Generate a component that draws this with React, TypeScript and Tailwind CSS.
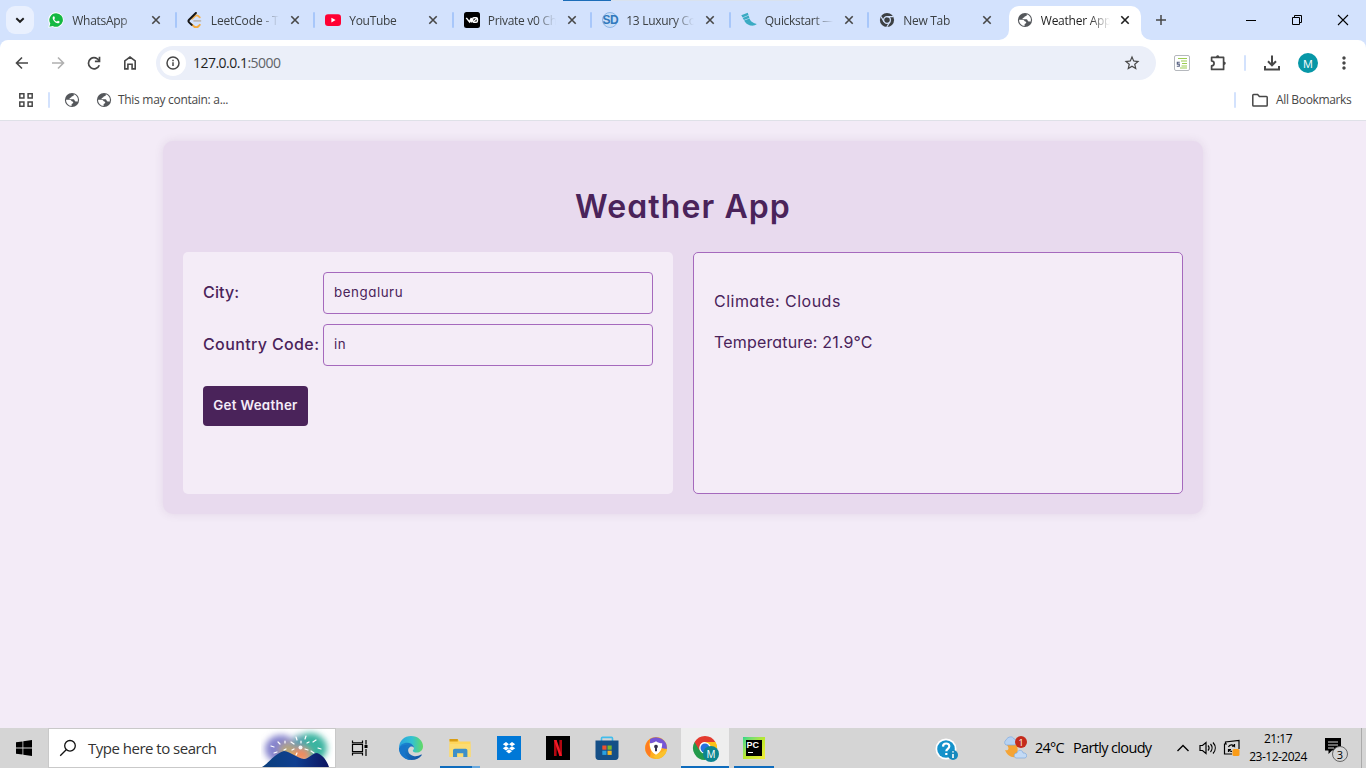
import type { ReactNode } from "react";
import { MdStarBorder, MdMoreVert } from "react-icons/md";

function WhatsAppIcon() {
  return (
    <svg viewBox="0 0 16 16" className="size-4">
      <path d="M8 .3a7.7 7.7 0 0 0-6.7 11.5L.2 15.8l4.1-1A7.7 7.7 0 1 0 8 .3z" fill="#fff" />
      <path d="M8.1 1.2a6.8 6.8 0 0 0-5.8 10.3l-.9 3.2 3.3-.8A6.8 6.8 0 1 0 8.1 1.2z" fill="#14b842" />
      <path d="M5.7 4.3c-.3 0-1.2.7-1 2 .3 2.400 2.800 4.800 5 5 1.300.1 2-.7 2-1.600 0-.3-1.600-1.100-1.900-1-.3.100-.700 1-1 .900C7.700 9.200 6.600 8.100 6.300 7.200c-.1-.300.700-.700.6-1.200-.1-.5-.6-1.600-.9-1.700z" fill="#fff" />
    </svg>
  );
}

function LeetCodeIcon() {
  return (
    <svg viewBox="0 0 16 16" className="size-4" fill="none" strokeLinecap="round">
      <path d="M12.800 5.400 11.300 4a2.800 2.800 0 0 0-3.400 0L5 6.900" stroke="#f5b14e" strokeWidth="1.800" />
      <path d="M4.500 12.200 6.800 14.200a3.300 3.300 0 0 0 4.600 0l1.400-1.400" stroke="#f5a93b" strokeWidth="1.900" />
      <path d="M7 8.900h6.500" stroke="#bdb8b4" strokeWidth="1.600" />
      <path d="M8.900 1 2.100 7.700a2 2 0 0 0 0 2.700l2.600 2.500" stroke="#161616" strokeWidth="2" />
    </svg>
  );
}

function YouTubeIcon() {
  return (
    <svg viewBox="0 0 16 16" className="size-4">
      <rect x="0" y="2.300" width="16" height="11.600" rx="3" fill="#ff0033" />
      <path d="M6.400 5.700v4.800L10.600 8.100z" fill="#fff" />
    </svg>
  );
}

function VZeroIcon() {
  return (
    <svg viewBox="0 0 16 16" className="size-4" fill="none" stroke="#fff" strokeWidth="1.500">
      <rect width="16" height="16" rx="2.500" fill="#000" stroke="none" />
      <path d="M2.300 5.900 5.500 9.900 7.300 6v4.400" />
      <rect x="8.700" y="5.800" width="4.700" height="4.500" rx="1.300" />
      <path d="m9 10 4.200-4" strokeWidth="1.200" />
    </svg>
  );
}

function SdIcon() {
  return (
    <span className="flex size-4 items-center justify-center rounded-full border border-[#8bb5e6] bg-[#c8ddf7]">
      <span className="font-['Liberation_Sans',sans-serif] text-[12px] leading-none font-bold tracking-[-0.6px] text-[#3179bd]">SD</span>
    </span>
  );
}

function FlaskIcon() {
  return (
    <svg viewBox="0 0 16 16" className="size-4">
      <path d="M.3 3.200 6.700.7l.8 2.200-5.900 2.600zM1.700 6.100l6-2.500.7 2.300-5.500 2zM3.100 8.500l5.500-1.900c.8 2.500 2.500 4.200 7.200 5.400-1.700 1.700-4.200 1.800-6.700 1.500C6 12.500 4.300 10.700 3.100 8.500z" fill="#3babc3" />
    </svg>
  );
}

function ChromeMonoIcon() {
  return (
    <svg viewBox="0 0 16 16" className="size-4">
      <circle cx="8" cy="8" r="7.100" fill="#3c4043" />
      <g fill="none" stroke="#d3e2fd" strokeWidth="1.200">
        <circle cx="8" cy="8" r="3.400" />
        <path d="M8 4.600h6.300M5 9.700 2 4.500M10.900 9.700l-3.100 5.300" />
      </g>
      <circle cx="8" cy="8" r="2" fill="#3c4043" />
    </svg>
  );
}

function GlobeIcon() {
  return (
    <svg viewBox="0 0 16 16" className="size-4 shrink-0">
      <circle cx="8" cy="8" r="7.100" fill="#54575b" />
      <path d="M9.800 2.200C10 3.300 9.400 4.200 8.400 4.200c-1.200 0-.8 1.300-1.900 1.500-1.100.2-1.300 1.600-.1 1.600h3c1.200 0 1.100 2.100 2.200 2.100h2.200A6 6 0 0 0 9.800 2.200z" fill="#fff" />
      <path d="M2 7.700h3.600c1.500 0 1.700 1.600 2.900 1.900 1.100.3.900 1.800 0 2-.9.200-1 1-.9 2.300A6 6 0 0 1 2 7.700z" fill="#fff" />
    </svg>
  );
}

function Close({ dark }: { dark?: boolean }) {
  return (
    <svg viewBox="0 0 16 16" className="size-4 shrink-0" stroke={dark ? "#1f1f1f" : "#474747"} strokeWidth="1.600">
      <path d="m4.300 4.300 7.400 7.400m0-7.400-7.400 7.400" />
    </svg>
  );
}

const tabs: { title: string; icon: ReactNode; style: string }[] = [
  { title: "WhatsApp", icon: <WhatsAppIcon />, style: "tracking-[-0.3px]" },
  { title: "LeetCode - T", icon: <LeetCodeIcon />, style: "tracking-[-0.15px]" },
  { title: "YouTube", icon: <YouTubeIcon />, style: "tracking-[-0.3px]" },
  { title: "Private v0 Ch", icon: <VZeroIcon />, style: "tracking-[-0.3px]" },
  { title: "13 Luxury Co", icon: <SdIcon />, style: "tracking-[-0.3px]" },
  { title: "Quickstart —", icon: <FlaskIcon />, style: "tracking-[-0.3px]" },
  { title: "New Tab", icon: <ChromeMonoIcon />, style: "tracking-[-0.3px]" },
];

function TabStrip() {
  return (
    <div className="relative flex h-10 bg-[#d3e2fd]">
      <div className="absolute top-0 left-[563px] flex h-px w-[240px] bg-[#d9e2ee]">
        <div className="w-12 bg-[#1c6db8]" />
      </div>
      <div className="flex w-[38.3px] shrink-0 items-center pl-[6px]">
        <div className="flex size-7 items-center justify-center rounded-[9px] bg-[#e9f0fe]">
          <svg viewBox="0 0 16 16" className="size-4" fill="none" stroke="#1f1f1f" strokeWidth="1.900">
            <path d="m4.300 6.200 3.700 3.600 3.700-3.600" />
          </svg>
        </div>
      </div>
      {tabs.map((t, i) => (
        <div key={t.title} className="flex w-[138.5px] shrink-0 items-center pl-[10px]">
          <span className="size-4 shrink-0">{t.icon}</span>
          <span className={`ml-2 w-[72px] pt-px text-[12px] whitespace-nowrap text-[#3c4043] [mask-image:linear-gradient(to_right,black_48px,transparent_68px)] ${t.style}`}>{t.title}</span>
          <span className="ml-[4px] flex"><Close /></span>
          {i < 6 && <span className="ml-auto h-4 w-[2px] rounded-full bg-[#a8c7fa]" />}
        </div>
      ))}
      <div className="flex w-[147px] shrink-0 pt-[6px]">
        <svg viewBox="0 0 10 10" className="-ml-[9px] mt-auto size-[10px] shrink-0"><path d="M10 0v10H0A10 10 0 0 0 10 0z" fill="#fff" /></svg>
        <div className="flex w-[132px] shrink-0 items-center rounded-t-[10px] bg-white pb-[6px] pl-2">
          <GlobeIcon />
          <span className="ml-2 w-[70px] pt-px text-[12px] tracking-[-0.25px] whitespace-nowrap text-[#1f1f1f] [mask-image:linear-gradient(to_right,black_48px,transparent_69px)]">Weather App</span>
          <span className="ml-[6px] flex"><Close dark /></span>
        </div>
        <svg viewBox="0 0 10 10" className="mt-auto size-[10px] shrink-0"><path d="M0 0v10h10A10 10 0 0 1 0 0z" fill="#fff" /></svg>
      </div>
      <div className="flex flex-1 items-center">
        <svg viewBox="0 0 16 16" className="ml-[-2px] size-4" stroke="#474747" strokeWidth="1.500"><path d="M8 3v10M3 8h10" /></svg>
        <svg viewBox="0 0 12 12" className="mr-[34px] ml-auto size-3" stroke="#000"><path d="M1 6.500h10" /></svg>
        <svg viewBox="0 0 12 12" className="mr-[34px] size-3" stroke="#000" fill="none"><path d="M1.500 3.500h7v7h-7zM3.500 3.500v-2h7v7h-2" /></svg>
        <svg viewBox="0 0 12 12" className="mr-[17px] size-3" stroke="#000" fill="none" strokeWidth="1.100"><path d="m1 1 10 10M11 1 1 11" /></svg>
      </div>
    </div>
  );
}

function Toolbar() {
  return (
    <div className="bg-[#d3e2fd]">
      <div className="flex h-[46px] items-center rounded-t-[8px] bg-white">
        <div className="ml-3 flex gap-4 text-[#474747]">
          <svg viewBox="0 0 20 20" className="size-5" fill="none" stroke="currentColor" strokeWidth="1.600"><path d="M16 10H5M10 4.500 4.500 10l5.500 5.500" /></svg>
          <svg viewBox="0 0 20 20" className="size-5" fill="none" stroke="#b0b0b0" strokeWidth="1.600"><path d="M4 10h11M10 4.500l5.500 5.500-5.500 5.500" /></svg>
          <svg viewBox="0 0 20 20" className="size-5" fill="none" stroke="currentColor" strokeWidth="1.700"><path d="M15.300 8.200A5.600 5.600 0 1 0 15.300 12.200" /><path d="M15.500 3.800v4.600h-4.600" /></svg>
          <svg viewBox="0 0 20 20" className="size-5" fill="none" stroke="currentColor" strokeWidth="1.600"><path d="M4.800 15.900V7.900L10 4l5.200 3.900v8h-3.100v-4.600H7.900v4.600z" /></svg>
        </div>
        <div className="ml-4 flex h-[34px] w-[1000px] items-center rounded-full bg-[#ebeff9]">
          <div className="ml-1 flex size-[26px] items-center justify-center rounded-full bg-white">
            <svg viewBox="0 0 16 16" className="size-4" fill="none" stroke="#474747" strokeWidth="1.500"><circle cx="8" cy="8" r="6" /><path d="M8 7.200V11M8 4.800v1.500" /></svg>
          </div>
          <span className="ml-[7px] pb-px text-[14px] tracking-[-0.52px] text-[#1f1f1f]">127.0.0.1<span className="text-[#5f6368]">:5000</span></span>
          <MdStarBorder className="mr-[15px] ml-auto size-[18px] text-[#474747]" />
        </div>
        <svg viewBox="0 0 16 16" className="ml-[18px] size-4">
          <rect x=".5" y=".5" width="15" height="15" rx="1.500" fill="#fff" stroke="#b5b8bd" />
          <path d="M4 3.500h9M7 6h6M8 8.500h5M7.500 11H13M6 13h7" stroke="#9ccc50" strokeWidth="1.200" />
          <path d="M5.800 7.200H3.300v1.900h2v2.200H2.800" fill="none" stroke="#555f80" strokeWidth="1.100" />
        </svg>
        <svg viewBox="0 0 20 20" className="ml-[18px] size-5" fill="none" stroke="#474747" strokeWidth="1.700" strokeLinejoin="round">
          <path d="M3.600 4.400h12v12h-12v-3.500c3.300-.6 3.300-4.400 0-5z" />
          <path d="M8 4.200a1.700 1.700 0 0 1 3.400 0zM15.800 8.500a1.700 1.700 0 0 1 0 3.400z" fill="#474747" stroke="none" />
          <path d="M8.700 3.400h2M16.600 9.200v2" />
        </svg>
        <span className="ml-4 h-4 w-[2px] rounded-full bg-[#d3e2fd]" />
        <svg viewBox="0 0 20 20" className="ml-4 size-5" fill="none" stroke="#474747" strokeWidth="2"><path d="M10 2.500v9M6 8.300l4 4 4-4M3 13v3.600h14V13" /></svg>
        <div className="ml-4 flex size-5 items-center justify-center rounded-full bg-[#0797a7] text-[11px] leading-none text-white">M</div>
        <MdMoreVert className="ml-[16px] size-5 text-[#474747]" />
      </div>
    </div>
  );
}

function Bookmarks() {
  return (
    <div className="flex h-[35px] items-center border-b border-[#dfe1e8] bg-white pb-[6px] text-[12px] text-[#474747]">
      <svg viewBox="0 0 16 16" className="ml-[18px] size-4" fill="none" stroke="currentColor" strokeWidth="1.500"><path d="M1.800 1.800h4.100v4.100H1.800zM10.100 1.800h4.100v4.100h-4.100zM1.800 10.100h4.100v4.100H1.800zM10.100 10.100h4.100v4.100h-4.100z" /></svg>
      <span className="ml-[14px] h-4 w-[2px] rounded-full bg-[#d3e2fd]" />
      <span className="ml-[14px]"><GlobeIcon /></span>
      <span className="ml-4"><GlobeIcon /></span>
      <span className="ml-[6px] tracking-[-0.3px] whitespace-nowrap">This may contain: a...</span>
      <span className="ml-auto h-4 w-[2px] rounded-full bg-[#d3e2fd]" />
      <svg viewBox="0 0 18 16" className="ml-[15px] h-4 w-[18px]" fill="none" stroke="currentColor" strokeWidth="1.500"><path d="M1.800 3.300a.8.8 0 0 1 .8-.8h4l1.800 2h7a.8.8 0 0 1 .8.8v7.900a.8.8 0 0 1-.8.800H2.600a.8.8 0 0 1-.8-.8z" /></svg>
      <span className="ml-[7px] w-[90px] tracking-[-0.35px] whitespace-nowrap">All Bookmarks</span>
    </div>
  );
}

function WeatherPage() {
  return (
    <main className="h-[607px] bg-[#f3ebf7] pt-5 font-['Inter',sans-serif] text-[#4a235a] [font-feature-settings:'cv11'_1]">
      <section className="mx-auto flex h-[373px] w-[1040px] flex-col rounded-[10px] bg-[#e8daee] px-5 pb-5 shadow-[0_0_10px_rgba(74,35,90,0.1)]">
        <h1 className="flex h-[111px] items-center justify-center pt-[20px] text-[32px] font-semibold tracking-[1.1px]">Weather App</h1>
        <div className="flex flex-1 gap-5">
          <form className="flex flex-1 flex-col gap-[10px] rounded-[5px] bg-[#f4ecf7] p-5">
            <label className="flex items-center text-[16px] font-medium">
              <span className="w-[120px] pb-[2px] tracking-[0.15px] whitespace-nowrap">City:</span>
              <input readOnly value="bengaluru" className="h-[42px] w-[330px] rounded-[4px] border border-[#a569bd] px-[10px] pb-[2px] text-[13.333px] font-normal tracking-[0.55px]" />
            </label>
            <label className="flex items-center text-[16px] font-medium">
              <span className="w-[120px] pb-[2px] tracking-[0.37px] whitespace-nowrap">Country Code:</span>
              <input readOnly value="in" className="h-[42px] w-[330px] rounded-[4px] border border-[#a569bd] px-[10px] pb-[2px] text-[13.333px] font-normal tracking-[0.5px]" />
            </label>
            <button type="button" className="mt-[10px] h-10 w-[105px] rounded-[4px] bg-[#4a235a] text-[13.333px] font-semibold tracking-[0.3px] whitespace-nowrap text-[#f4ecf7]">Get Weather</button>
          </form>
          <div className="flex-1 rounded-[5px] border border-[#a569bd] bg-[#f4ecf7] px-5 pt-9 text-[16px]">
            <p className="h-[41px] tracking-[0.48px]">Climate: Clouds</p>
            <p className="tracking-[0.17px]">Temperature: 21.9°C</p>
          </div>
        </div>
      </section>
    </main>
  );
}

function Fireworks() {
  return (
    <svg viewBox="0 0 72 38" className="h-[38px] w-[72px]">
      <defs>
        <filter id="soft" x="-40%" y="-40%" width="180%" height="180%"><feGaussianBlur stdDeviation="3" /></filter>
        <linearGradient id="hill" x1="0" x2="1" y1="0" y2="0"><stop offset="0" stopColor="#0b3f7c" /><stop offset=".5" stopColor="#103f90" /><stop offset="1" stopColor="#0d1460" /></linearGradient>
      </defs>
      <g filter="url(#soft)">
        <ellipse cx="20" cy="20" rx="16" ry="14" fill="#8583cd" />
        <ellipse cx="49" cy="19" rx="17" ry="15" fill="#3bb4a0" />
        <ellipse cx="27" cy="22" rx="9" ry="9" fill="#b3a57e" />
        <ellipse cx="38" cy="14" rx="6" ry="8" fill="#5c9fae" />
        <ellipse cx="40" cy="26" rx="9" ry="7" fill="#f28a5c" />
        <ellipse cx="28" cy="29" rx="7" ry="4" fill="#edb83e" />
      </g>
      <g stroke="#fff" strokeWidth="1.200" strokeLinecap="round">
        <path d="m35 8 1 3M45 7l-1 3M55 11l-3 2M57 19l3 1M30 13l3 2M40 12v2M46 14l2-1M50 22l3 2M33 20l-2 1M44 20l3 1M36 24l-1 2" />
        <path d="m17 13 2 2M10 17l3 1M24 12v2M13 24l3-1M25 20l-2 1" />
      </g>
      <circle cx="39.500" cy="18.500" r="2" fill="#fff" opacity=".9" />
      <path d="M1 38C8 34 13 25 23 22c7 1 13 7 20 8 5 0 8-6 13-6 6 2 10 8 12 14z" fill="url(#hill)" />
    </svg>
  );
}

function EdgeIcon() {
  return (
    <svg viewBox="0 0 24 24" className="size-6">
      <defs>
        <linearGradient id="edgeTop" x1="0" x2="1"><stop stopColor="#2aa3df" /><stop offset=".55" stopColor="#33c2d0" /><stop offset="1" stopColor="#63da62" /></linearGradient>
        <linearGradient id="edgeLow" x1="0" y1="0" x2="1" y2="1"><stop stopColor="#1b8bd8" /><stop offset="1" stopColor="#124f9e" /></linearGradient>
      </defs>
      <path d="M0 12C0 4.700 5.600 0 12 0c7.400 0 12 5 12 10.300 0 4-3 6.300-6.200 6.300-2.600 0-4-1-4-1.900 0-.8 1.200-1 1.200-2.700C15 9.500 12.300 7.500 9.300 7.500 5 7.500 1 9.900 0 12z" fill="url(#edgeTop)" />
      <path d="M0 12.500c.6-3.500 4.300-6 8.800-5.700 3.500.3 6.200 2.500 6.200 5-1-1-2.500-1.600-4-.9-2.600 1.400-2.400 5.300.4 7.600 2.900 2.200 6.900 2.400 10.700.1.500-.3.900.2.600.7C20.600 22.300 17 24 12.500 24 5.500 24 0 18.800 0 12.500z" fill="url(#edgeLow)" />
      <path d="M6 13.500c-.8 5 2.500 9.500 7 10.500C5.500 24.300.3 19 .1 12.300 2 9 6 8.400 9 9.200 7.300 10 6.300 11.500 6 13.500z" fill="#1675ca" />
    </svg>
  );
}

function ExplorerIcon() {
  return (
    <svg viewBox="0 0 24 24" className="size-6">
      <path d="M1.500 3h8.300l1.800 2.500h10.900V21h-21z" fill="#ffd65c" />
      <path d="M1.500 3h8.300v2.500h-8.300z" fill="#d99d14" />
      <path d="M1.500 8h21v13h-21z" fill="#fcdc72" />
      <path d="M5 21v-6.500c0-1 .8-1.700 1.700-1.700h11c1 0 1.700.8 1.700 1.700V21h-4.100v-3.700H9.100V21z" fill="#3e90c9" />
    </svg>
  );
}

function DropboxIcon() {
  return (
    <svg viewBox="0 0 24 24" className="size-6">
      <path d="M0 0h24v24H0z" fill="#0078d7" />
      <path d="m9 6-3.200 2.200L9 10.300l3-2.100zM15 6l-3 2.200 3 2.100 3.200-2.100zM5.800 12.300 9 14.400l3-2.100-3-2zM15 10.300l-3 2 3 2.100 3.200-2.100zM9 15.300l3 2.100 3-2.100-3-2z" fill="#fff" />
    </svg>
  );
}

function NetflixIcon() {
  return (
    <svg viewBox="0 0 24 24" className="size-6">
      <path d="M0 0h24v24H0z" fill="#000" />
      <path d="M8 4h2.600v16H8zM13.400 4H16v16h-2.600z" fill="#b20710" />
      <path d="M8 4h2.600L16 20h-2.600z" fill="#f21a27" />
    </svg>
  );
}

function StoreIcon() {
  return (
    <svg viewBox="0 0 24 24" className="size-6">
      <path d="M6.500 6V2.400c0-.6.400-1 1-1h9c.6 0 1 .4 1 1V6" fill="none" stroke="#42bdec" strokeWidth="1.600" />
      <path d="M.5 4.500h23v16c0 2-1 3.500-3 3.500h-17c-2 0-3-1.500-3-3.500z" fill="#154f87" />
      <path d="M7.300 9.500h4.200v4.200H7.300z" fill="#ef512d" /><path d="M12.500 9.500h4.200v4.200h-4.200z" fill="#79b72b" />
      <path d="M7.300 14.700h4.200v4.200H7.300z" fill="#29a0df" /><path d="M12.500 14.700h4.200v4.200h-4.200z" fill="#f5b523" />
    </svg>
  );
}

function AvastIcon() {
  return (
    <svg viewBox="0 0 24 24" className="size-6">
      <circle cx="12" cy="12" r="11" fill="#ffae20" />
      <path d="M6 3A11 11 0 0 1 22.900 13L17 12 12 6 6 8z" fill="#7656d6" />
      <path d="M6 3A11 11 0 0 0 6 21l1-6L5 9z" fill="#ff7b22" />
      <path d="M22.900 12.500A11 11 0 0 1 12 23L9 20l9-4z" fill="#fbc22c" />
      <path d="M12 5.200c2 1.500 4 2 6.200 2.100 0 5.500-1.800 9-6.200 11.500C7.600 16.300 5.800 12.800 5.800 7.300 8 7.200 10 6.700 12 5.200z" fill="#fff" />
      <path d="M12 8.700a1.900 1.900 0 0 0-1 3.500v3h2v-3a1.900 1.900 0 0 0-1-3.500z" fill="#34304d" />
    </svg>
  );
}

function ChromeIcon() {
  return (
    <svg viewBox="0 0 28 28" className="size-7 overflow-visible">
      <path d="M12 12 22.400 6A12 12 0 0 1 12 24z" fill="#fbc116" />
      <path d="M12 12v12A12 12 0 0 1 1.600 6z" fill="#239a4b" />
      <path d="M12 6h10.400a12 12 0 0 1 1.600 6l-7 3z" fill="#fbc116" />
      <path d="M1.600 6A12 12 0 0 1 22.400 6H12c-3 0-5 2-5.500 4.700L6.500 14.500z" fill="#e33b2e" />
      <circle cx="12" cy="12" r="5.800" fill="#fff" /><circle cx="12" cy="12" r="4.500" fill="#2672df" />
    </svg>
  );
}

function TaskItem({ children, state = "w-[49px]" }: { children: ReactNode; state?: string }) {
  return <div className={`relative flex h-10 shrink-0 items-center justify-center ${state}`}>{children}</div>;
}

function Taskbar() {
  return (
    <footer className="flex h-10 items-center bg-[#d5d5d5] text-[15px] text-black">
      <div className="flex w-12 justify-center">
        <svg viewBox="0 0 16 16" className="size-4" fill="#000"><path d="M0 2.300 6.500 1.400v6.100H0zM7.300 1.300 16 0v7.500H7.300zM0 8.400h6.500v6.200L0 13.700zM7.300 8.400H16V16l-8.700-1.300z" /></svg>
      </div>
      <div className="flex h-10 w-[288px] items-center border border-[#c9c9c9] bg-white">
        <svg viewBox="0 0 18 18" className="ml-[10px] size-[18px]" fill="none" stroke="#111" strokeWidth="1.300"><circle cx="11" cy="6.800" r="5.300" /><path d="m7.200 10.700-6 6" /></svg>
        <span className="ml-[11px] w-[172px] pt-px tracking-[-0.5px] whitespace-nowrap text-[#333]">Type here to search</span>
        <span className="ml-[1px]"><Fireworks /></span>
      </div>
      <TaskItem>
        <svg viewBox="0 0 18 18" className="mr-[2px] size-[18px]" fill="none" stroke="#000" strokeWidth="1.200"><path d="M1.500 5.500h10v7h-10zM1.500 1.500v2.300h10V1.500M1.500 16.500v-2.300h10v2.300M15 1v4.500M15 10v7" /><path d="M13.500 6h3v3h-3z" fill="#000" stroke="none" /></svg>
      </TaskItem>
      <div className="ml-px flex">
        <TaskItem><EdgeIcon /></TaskItem>
        <TaskItem>
          <ExplorerIcon />
          <span className="absolute bottom-0 left-[5px] flex h-[2px] w-10 bg-[#68a9df]"><span className="w-8 bg-[#0f6cbd]" /></span>
        </TaskItem>
        <TaskItem><DropboxIcon /></TaskItem>
        <TaskItem><NetflixIcon /></TaskItem>
        <TaskItem><StoreIcon /></TaskItem>
        <TaskItem><AvastIcon /></TaskItem>
        <TaskItem state="ml-px w-12 bg-[#eeeeee] border-b-2 border-[#0f6cbd]">
          <span className="mt-[6px] ml-1 flex"><ChromeIcon /></span>
          <span className="absolute top-[18px] left-[22px] flex size-4 items-center justify-center rounded-full bg-[#0d8590] text-[10px] leading-none text-white">M</span>
        </TaskItem>
        <TaskItem>
          <span className="flex size-[22px] items-center justify-center bg-linear-to-br from-[#21d789] via-[#b9e82e] to-[#f4ed3c]">
            <span className="flex size-4 flex-col bg-black pl-px font-['Liberation_Sans',sans-serif] text-[9px] leading-[10px] font-bold text-white">PC<span className="mt-[2px] ml-px h-px w-[5px] bg-white" /></span>
          </span>
          <span className="absolute bottom-0 left-[5px] h-[2px] w-10 bg-[#0f6cbd]" />
        </TaskItem>
      </div>
      <div className="ml-auto flex h-10 w-[431px] shrink-0 items-center">
        <svg viewBox="0 0 24 24" className="mt-1 size-6 shrink-0">
          <circle cx="11" cy="11" r="10.500" fill="#fff" /><circle cx="11" cy="11" r="8.800" fill="#1492cb" />
          <path d="M8 8.600c.1-4.200 6.300-4 6.300-.3 0 2.600-3 2.500-3 5M11.300 15v2" fill="none" stroke="#fff" strokeWidth="2.200" />
          <circle cx="18" cy="17" r="5" fill="#1688bd" /><path d="M18 16v4M18 13.200v1.400" stroke="#fff" strokeWidth="1.600" />
        </svg>
        <span className="relative ml-[44px] flex size-6 shrink-0">
          <svg viewBox="0 0 24 24" className="size-6">
            <path d="M4 9h10c1 5 1 8-1 12C8 22 4 19 2 14c3 1 5-1 2-5z" fill="#f5a435" />
            <path d="M3 9a3 3 0 0 1 0-5c2-4 7-4 8-1 4 0 4 6 0 6z" fill="#b7d2f2" stroke="#7fabe0" strokeWidth=".7" />
            <path d="M13 22c-3-1-2-5 1-5 1-4 6-3 6 0 4-.5 5 4 2 5z" fill="#c3daf5" stroke="#7fabe0" strokeWidth=".7" />
          </svg>
          <span className="absolute top-0 left-3 flex size-3 items-center justify-center rounded-full bg-[#c42b1c] text-[9px] leading-none text-white">1</span>
        </span>
        <span className="ml-[8px] w-[38px] text-[14.500px] tracking-[-0.8px] whitespace-nowrap">24°C</span>
        <span className="w-[99px] text-[14.500px] tracking-[-0.65px] whitespace-nowrap">Partly cloudy</span>
        <svg viewBox="0 0 14 14" className="mr-[2px] ml-[4px] size-[14px] shrink-0" fill="none" stroke="#000" strokeWidth="1.400"><path d="m1.500 10 5.500-5.500 5.500 5.500" /></svg>
        <svg viewBox="0 0 18 16" className="ml-[7px] h-4 w-[18px] shrink-0" fill="none" stroke="#000" strokeWidth="1.200"><path d="M1 5.500h2.500L7 2.500v11L3.500 10.500H1zM9 5.500c1.300 1.500 1.300 3.500 0 5M11.500 4c2 2.300 2 5.700 0 8M14 2.500c3 3.300 3 7.700 0 11" /></svg>
        <svg viewBox="0 0 18 18" className="ml-[6px] size-[18px] shrink-0" fill="none" stroke="#000" strokeWidth="1.200">
          <path d="M2.500 5V3L16 1.500V10M4 5H1.500v10H9M5.500 8a3.500 3.500 0 0 1 6-.8V5M11.500 7.200H9M5.500 13v-2.500H8M6 10.500c.7 1.500 2 2 3 1.800" />
          <rect x="9.500" y="10" width="7" height="7" rx="1.500" fill="#fa9b16" stroke="none" />
        </svg>
        <span className="ml-[3px] flex w-[68px] flex-col items-center pb-px text-[12px] leading-[18px] tracking-[-0.5px] whitespace-nowrap"><span>21:17</span><span>23-12-2024</span></span>
        <span className="relative ml-[13px] flex h-5 w-6 shrink-0">
          <svg viewBox="0 0 16 16" className="size-4"><path d="M0 0h16v12.500H7L3.500 16v-3.500H0z" fill="#000" /><path d="M3 4h10M3 7h10M3 10h6" stroke="#d5d5d5" /></svg>
          <span className="absolute top-[8px] left-[7px] flex size-4 items-center justify-center rounded-full border border-[#666] bg-[#d5d5d5] text-[11px] leading-none">3</span>
        </span>
        <span className="mr-1 ml-auto h-10 w-px bg-[#aaa]" />
      </div>
    </footer>
  );
}

export default function App() {
  return (
    <div className="h-[768px] w-[1366px] overflow-hidden bg-white font-['Open_Sans','Noto_Sans',sans-serif]">
      <TabStrip />
      <Toolbar />
      <Bookmarks />
      <WeatherPage />
      <Taskbar />
    </div>
  );
}
